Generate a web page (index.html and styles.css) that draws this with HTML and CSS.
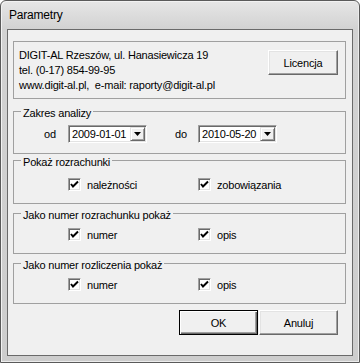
FILE: index.html
```html
<!DOCTYPE html>
<html lang="pl">
<head>
    <meta charset="UTF-8">
    <meta name="viewport" content="width=device-width, initial-scale=1.0">
    <title>Parametry</title>
    <link rel="stylesheet" href="styles.css">
</head>
<body>
    <div class="window">
        <div class="titlebar"><span class="title">Parametry</span></div>
        <div class="client">
            <div class="info">
                <div class="info-text">
                    <div>DIGIT-AL Rzeszów, ul. Hanasiewicza 19</div>
                    <div>tel. (0-17) 854-99-95</div>
                    <div>www.digit-al.pl,&nbsp; e-mail: raporty@digit-al.pl</div>
                </div>
                <button class="btn btn-licence">Licencja</button>
            </div>

            <fieldset class="group group-range">
                <legend>Zakres analizy</legend>
                <div class="range-row">
                    <span class="range-label">od</span>
                    <div class="combo">
                        <span class="combo-value">2009-01-01</span>
                        <span class="combo-btn"><svg width="7" height="4" viewBox="0 0 7 4"><path d="M0 0h7L3.5 4z" fill="#000"/></svg></span>
                    </div>
                    <span class="range-label range-label-to">do</span>
                    <div class="combo">
                        <span class="combo-value">2010-05-20</span>
                        <span class="combo-btn"><svg width="7" height="4" viewBox="0 0 7 4"><path d="M0 0h7L3.5 4z" fill="#000"/></svg></span>
                    </div>
                </div>
            </fieldset>

            <fieldset class="group group-show">
                <legend>Pokaż rozrachunki</legend>
                <div class="check-row">
                    <label class="check"><span class="box"><svg width="9" height="9" viewBox="0 0 9 9"><polyline points="1,4 3,6.5 8,1.5" fill="none" stroke="#000" stroke-width="2"/></svg></span>należności</label>
                    <label class="check"><span class="box"><svg width="9" height="9" viewBox="0 0 9 9"><polyline points="1,4 3,6.5 8,1.5" fill="none" stroke="#000" stroke-width="2"/></svg></span>zobowiązania</label>
                </div>
            </fieldset>

            <fieldset class="group">
                <legend>Jako numer rozrachunku pokaż</legend>
                <div class="check-row">
                    <label class="check"><span class="box"><svg width="9" height="9" viewBox="0 0 9 9"><polyline points="1,4 3,6.5 8,1.5" fill="none" stroke="#000" stroke-width="2"/></svg></span>numer</label>
                    <label class="check"><span class="box"><svg width="9" height="9" viewBox="0 0 9 9"><polyline points="1,4 3,6.5 8,1.5" fill="none" stroke="#000" stroke-width="2"/></svg></span>opis</label>
                </div>
            </fieldset>

            <fieldset class="group">
                <legend>Jako numer rozliczenia pokaż</legend>
                <div class="check-row">
                    <label class="check"><span class="box"><svg width="9" height="9" viewBox="0 0 9 9"><polyline points="1,4 3,6.5 8,1.5" fill="none" stroke="#000" stroke-width="2"/></svg></span>numer</label>
                    <label class="check"><span class="box"><svg width="9" height="9" viewBox="0 0 9 9"><polyline points="1,4 3,6.5 8,1.5" fill="none" stroke="#000" stroke-width="2"/></svg></span>opis</label>
                </div>
            </fieldset>

            <div class="actions">
                <button class="btn btn-default">OK</button>
                <button class="btn">Anuluj</button>
            </div>
        </div>
    </div>
</body>
</html>
```
FILE: styles.css
```css
body {
    margin: 0;
    font-family: "Liberation Sans", Arial, sans-serif;
    font-size: 11px;
    color: #000;
}

.window {
    width: 360px;
    height: 363px;
    box-sizing: border-box;
    border: 1px solid #5a5a5a;
    border-radius: 6px 6px 0 0;
    background: linear-gradient(#e6e6e6, #d2d2d2 28px, #cdcdcd);
    box-shadow: inset 1px 1px 0 #f2f2f2, inset -1px -1px 0 #ececec;
    padding: 0 6px 6px;
    display: flex;
    flex-direction: column;
}

.titlebar {
    height: 28px;
    display: flex;
    align-items: center;
    padding-left: 2px;
}

.title {
    font-size: 12px;
    letter-spacing: -0.2px;
}

.client {
    flex: 1;
    border: 1px solid #6a6a6a;
    background-color: #f0f0f0;
    padding: 11px 6px 0 5px;
    letter-spacing: -0.2px;
}

/* panel z adresem */
.info {
    display: flex;
    justify-content: space-between;
    align-items: flex-start;
    border: 1px solid #a0a0a0;
    padding: 6px 7px 5px 5px;
}

.info-text {
    line-height: 15px;
}

.btn {
    font-family: inherit;
    font-size: 11px;
    letter-spacing: -0.2px;
    width: 79px;
    height: 25px;
    padding: 0;
    background-color: #f0f0f0;
    border: 1px solid;
    border-color: #fff #696969 #696969 #fff;
    box-shadow: inset -1px -1px 0 #a0a0a0, inset 1px 1px 0 #e3e3e3;
    color: #000;
}

.btn-licence {
    width: 70px;
    margin-top: 2px;
}

.btn-default {
    border-color: #000;
    box-shadow: inset 1px 1px 0 #fff, inset -1px -1px 0 #696969, inset -2px -2px 0 #a0a0a0;
}

/* grupy */
.group {
    margin: 0;
    border: 1px solid #a0a0a0;
    padding: 8px 0 11px;
}

.group legend {
    margin-left: 7px;
    padding: 3px 2px 0;
    line-height: 8px;
}

.group-range {
    margin-top: 7px;
    padding-bottom: 10px;
}

.group-show {
    margin-top: 1px;
    padding-top: 11px;
}

.group + .group {
    margin-top: 4px;
}

.group-range + .group-show {
    margin-top: 1px;
}

.range-row {
    display: flex;
    align-items: center;
    padding-left: 30px;
}

.range-label {
    width: 24px;
}

.range-label-to {
    margin-left: 28px;
    width: 23px;
}

.combo {
    width: 79px;
    height: 18px;
    box-sizing: border-box;
    display: flex;
    justify-content: space-between;
    background-color: #fff;
    border: 1px solid;
    border-color: #a0a0a0 #fff #fff #a0a0a0;
    box-shadow: inset 1px 1px 0 #696969, inset -1px -1px 0 #e3e3e3;
    padding: 1px;
}

.combo-value {
    padding-left: 2px;
    line-height: 14px;
}

.combo-btn {
    width: 15px;
    box-sizing: border-box;
    display: flex;
    align-items: center;
    justify-content: center;
    background-color: #f0f0f0;
    border: 1px solid;
    border-color: #e3e3e3 #696969 #696969 #e3e3e3;
    box-shadow: inset 1px 1px 0 #fff, inset -1px -1px 0 #a0a0a0;
}

.check-row {
    display: grid;
    grid-template-columns: 130px 130px;
    padding-left: 54px;
}

.check {
    display: flex;
    align-items: center;
    height: 15px;
}

.box {
    width: 13px;
    height: 13px;
    box-sizing: border-box;
    display: flex;
    align-items: center;
    justify-content: center;
    margin-right: 6px;
    background-color: #fff;
    border: 1px solid;
    border-color: #a0a0a0 #fff #fff #a0a0a0;
    box-shadow: inset 1px 1px 0 #696969, inset -1px -1px 0 #e3e3e3;
}

.actions {
    display: flex;
    justify-content: flex-end;
    gap: 1px;
    margin-top: 6px;
    padding-right: 8px;
}
```
